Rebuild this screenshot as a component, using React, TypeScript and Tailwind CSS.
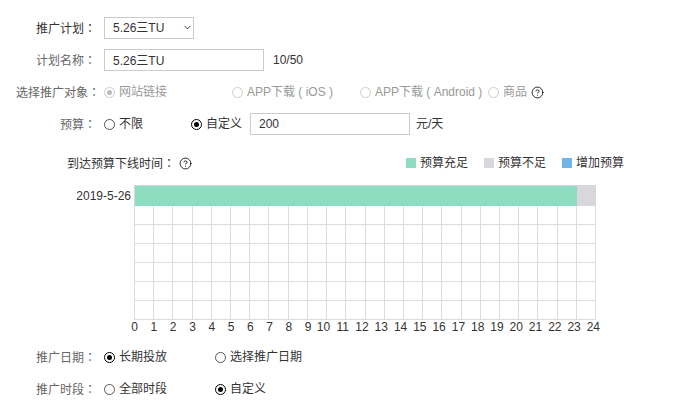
import { useState, type ReactNode } from 'react';
import { ChevronDown, CircleQuestionMark } from 'lucide-react';

const HOURS = Array.from({ length: 25 }, (_, i) => i);
const GRID_ROWS = 6;
const BUDGET_END_HOUR = 23;

const LEGEND = [
  { label: '预算充足', color: 'bg-[#8eddc1]' },
  { label: '预算不足', color: 'bg-[#d7d7dc]' },
  { label: '增加预算', color: 'bg-[#71b4e8]' },
];

// Full-width colon, centered in its box
function Colon() {
  return <span className="font-['Noto_Sans_CJK_TC',sans-serif]">：</span>;
}

interface RowProps {
  label: string;
  htmlFor?: string;
  labelClass?: string;
  children: ReactNode;
}

function Row({ label, htmlFor, labelClass = 'pr-1 text-[#666]', children }: RowProps) {
  return (
    <div className="flex h-[22px] items-center">
      <label htmlFor={htmlFor} className={`w-[100px] shrink-0 text-right whitespace-nowrap ${labelClass}`}>
        {label}
        <Colon />
      </label>
      <div className="ml-1 flex items-center">{children}</div>
    </div>
  );
}

interface RadioProps {
  name: string;
  label: string;
  checked: boolean;
  onChange?: () => void;
  disabled?: boolean;
  className?: string;
}

function Radio({ name, label, checked, onChange, disabled = false, className = '' }: RadioProps) {
  return (
    <label className={`flex shrink-0 items-center gap-1 whitespace-nowrap ${disabled ? 'text-[#999]' : 'cursor-pointer'} ${className}`}>
      <span className="grid shrink-0 place-items-center">
        <input
          type="radio"
          name={name}
          checked={checked}
          disabled={disabled}
          onChange={() => onChange?.()}
          className="peer col-start-1 row-start-1 size-[11px] appearance-none rounded-full border border-[#555] bg-white checked:border-black disabled:border-[#ccc]"
        />
        <span className="pointer-events-none col-start-1 row-start-1 hidden size-[5px] rounded-full bg-black peer-checked:block peer-disabled:bg-[#bbb]" />
      </span>
      {label}
    </label>
  );
}

function Help() {
  return (
    <button type="button" aria-label="帮助" className="shrink-0 cursor-pointer">
      <CircleQuestionMark className="size-[13px] text-[#222]" strokeWidth={1.8} />
    </button>
  );
}

function BudgetChart() {
  return (
    <div className="mr-[28px] flex">
      <div className="flex h-[21px] w-[134px] shrink-0 items-center justify-end pr-[3px]">2019-5-26</div>
      <div className="min-w-0 flex-1">
        {/* Budget bar */}
        <div className="flex h-[21px] border-t border-l border-[#d7d7dc] bg-[#d7d7dc]">
          <div className="bg-[#8eddc1]" style={{ width: `${(BUDGET_END_HOUR / 24) * 100}%` }} />
        </div>
        {/* Hour grid */}
        <div className="grid grid-cols-24 border-l border-[#ddd]">
          {Array.from({ length: 24 * GRID_ROWS }, (_, i) => (
            <div key={i} className="h-[19px] border-r border-b border-[#ddd]" />
          ))}
        </div>
        <div className="-mr-[11px] -ml-[9px] grid h-[14px] grid-cols-25 leading-[14px]">
          {HOURS.map((h) => (
            <span key={h} className={`flex justify-center ${h > 9 ? 'pr-2' : ''}`}>
              {h}
            </span>
          ))}
        </div>
      </div>
    </div>
  );
}

export default function App() {
  const [plan, setPlan] = useState('5.26三TU');
  const [name, setName] = useState('5.26三TU');
  const [budgetType, setBudgetType] = useState('custom');
  const [budget, setBudget] = useState('200');
  const [dateType, setDateType] = useState('long');
  const [timeType, setTimeType] = useState('custom');

  return (
    <form className="bg-white pt-[17px] pr-[66px] font-['Liberation_Sans','Noto_Sans_CJK_SC',sans-serif] text-xs text-[#333]">
      <div className="flex flex-col gap-[10px]">
        <Row label="推广计划" htmlFor="plan" labelClass="pr-1 text-[#333]">
          <div className="relative">
            <select
              id="plan"
              value={plan}
              onChange={(e) => setPlan(e.target.value)}
              className="h-[22px] w-[90px] appearance-none border border-[#ccc] bg-white pl-2"
            >
              <option>5.26三TU</option>
            </select>
            <ChevronDown className="pointer-events-none absolute top-[5px] right-[1px] size-[11px]" />
          </div>
        </Row>

        <Row label="计划名称" htmlFor="name">
          <input
            id="name"
            value={name}
            onChange={(e) => setName(e.target.value)}
            className="h-[22px] w-[160px] border border-[#ccc] pb-[2px] pl-2"
          />
          <span className="ml-[9px]">10/50</span>
        </Row>

        <Row label="选择推广对象" labelClass="text-[#666]">
          <Radio name="target" label="网站链接" checked disabled className="w-[128px]" />
          <Radio name="target" label="APP下载 ( iOS )" checked={false} disabled className="w-[128px]" />
          <Radio name="target" label="APP下载 ( Android )" checked={false} disabled className="w-[128px]" />
          <Radio name="target" label="商品" checked={false} disabled className="mr-1" />
          <Help />
        </Row>

        <Row label="预算">
          <Radio name="budget" label="不限" checked={budgetType === 'none'} onChange={() => setBudgetType('none')} className="w-[87px]" />
          <Radio name="budget" label="自定义" checked={budgetType === 'custom'} onChange={() => setBudgetType('custom')} />
          <input
            aria-label="预算"
            value={budget}
            onChange={(e) => setBudget(e.target.value)}
            className="ml-2 h-[22px] w-[160px] border border-[#ccc] pl-2"
          />
          <span className="ml-[6px]">元/天</span>
        </Row>
      </div>

      <div className="mt-[17px] mb-[11px] flex h-[22px] items-center pl-[67px]">
        <span className="mr-1">
          到达预算下线时间
          <Colon />
        </span>
        <Help />
        <div className="ml-auto flex gap-4">
          {LEGEND.map((item) => (
            <span key={item.label} className="flex items-center gap-1">
              <span className={`size-[10px] ${item.color}`} />
              {item.label}
            </span>
          ))}
        </div>
      </div>

      <BudgetChart />

      <div className="mt-[12px] flex flex-col gap-[10px]">
        <Row label="推广日期">
          <Radio name="date" label="长期投放" checked={dateType === 'long'} onChange={() => setDateType('long')} className="w-[111px]" />
          <Radio name="date" label="选择推广日期" checked={dateType === 'range'} onChange={() => setDateType('range')} />
        </Row>
        <Row label="推广时段">
          <Radio name="time" label="全部时段" checked={timeType === 'all'} onChange={() => setTimeType('all')} className="w-[111px]" />
          <Radio name="time" label="自定义" checked={timeType === 'custom'} onChange={() => setTimeType('custom')} />
        </Row>
      </div>
    </form>
  );
}
